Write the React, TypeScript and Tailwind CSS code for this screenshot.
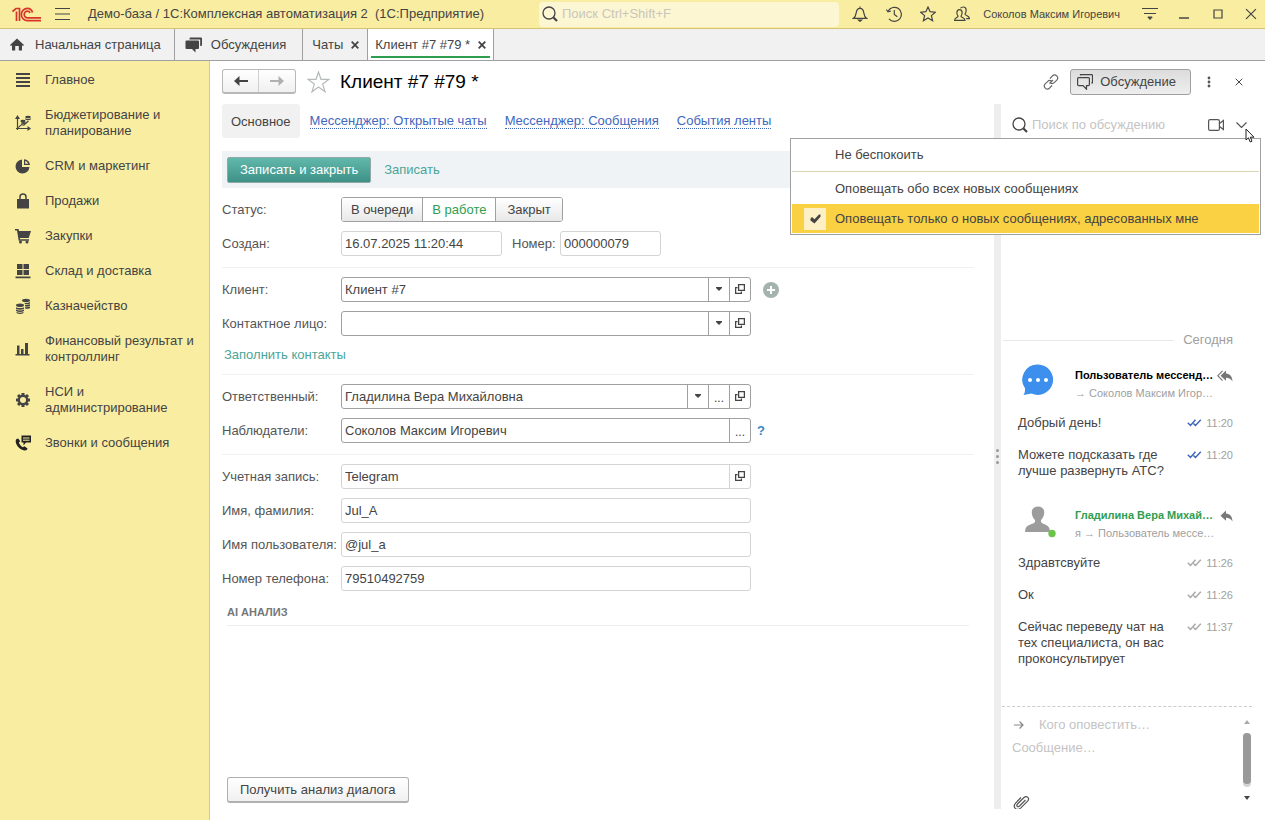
import { useState } from 'react';
import type { ReactNode } from 'react';

const sections = [
    { title: 'Главное', icon: 'menu' },
    { title: 'Бюджетирование и планирование', icon: 'budget' },
    { title: 'CRM и маркетинг', icon: 'pie' },
    { title: 'Продажи', icon: 'bag' },
    { title: 'Закупки', icon: 'cart' },
    { title: 'Склад и доставка', icon: 'stock' },
    { title: 'Казначейство', icon: 'coins' },
    { title: 'Финансовый результат и контроллинг', icon: 'bars' },
    { title: 'НСИ и администрирование', icon: 'gear' },
    { title: 'Звонки и сообщения', icon: 'phone' },
];

const sectionIcons: Record<string, ReactNode> = {
    menu: <path d="M1 1h14v2H1zM1 5h14v2H1zM1 9h14v2H1zM1 13h14v2H1z" />,
    budget: (
        <>
            <path d="M2.500 15V2M1 13.500h13" fill="none" stroke="currentColor" strokeWidth="1.200" />
            <path d="M2.500 0 0 4h5zM16 13.500 12.500 11v5zM3 12l3.500-3 2 .5L13 5.500l.8.900L9 10.700l-2.200-.5L3.500 13z" />
            <ellipse cx="8" cy="6" rx="2.600" ry="1.200" />
            <ellipse cx="8.500" cy="8" rx="2.600" ry="1" />
            <ellipse cx="13" cy="2" rx="2.800" ry="1.200" />
            <path d="M10.200 3.300c1.500.9 4 .9 5.600 0v1.300c-1.500 1-4 1-5.600 0z" />
        </>
    ),
    pie: <path d="M7 1.500V9h7.500A7 7 0 1 1 7 1.500zM9 1.200A6.600 6.600 0 0 1 15 7H9zM10.200 2.800v3h3a5 5 0 0 0-3-3z" fillRule="evenodd" />,
    bag: (
        <>
            <path d="M2 6h12v9.500H2z" />
            <path d="M5 8V4a3 3 0 0 1 6 0v4" fill="none" stroke="currentColor" strokeWidth="1.500" />
        </>
    ),
    cart: (
        <>
            <path d="M0 1h3.500l.6 2H16l-2.300 7H4.800l.3 1.200H14v1.500H3.700L2 2.500H0z" />
            <circle cx="5.500" cy="14" r="1.500" />
            <circle cx="12" cy="14" r="1.500" />
        </>
    ),
    stock: <path d="M2 1h5.500v5H2zM8.500 1H14v5H8.500zM2 7h5.500v5H2zM8.500 7H14v5H8.500zM.5 13.500h15v1.800H.5z" />,
    coins: (
        <>
            <ellipse cx="11" cy="2.500" rx="4" ry="1.700" />
            <path d="M9.500 4.700c1.800.5 4 .2 5.500-.7v1.500c-1.400.8-3 1-5 .7zM10 7c1.800.3 3.600 0 5-.7v1.500c-1.400.8-3 1-4.800.7zM10 9.200c1.800.3 3.600 0 5-.7V10c-1.400.8-3 1-4.800.7z" />
            <ellipse cx="5" cy="7.300" rx="4" ry="1.800" />
            <path d="M1 9.200c2.400 1.200 5.600 1.200 8 0v1.500c-2.400 1.300-5.600 1.300-8 0zM1 11.500c2.400 1.200 5.600 1.200 8 0V13c-2.400 1.300-5.600 1.300-8 0zM1.500 14c2.200 1 4.800 1 7 0v1c-2.200 1.200-4.800 1.200-7 0z" />
        </>
    ),
    bars: <path d="M2 4.500h2.500V13H6V8h2.500v5H10V2h3v11h1.500v1.500h-14V13H2z" />,
    gear: (
        <>
            <circle cx="8" cy="8" r="4.200" fill="none" stroke="currentColor" strokeWidth="2.400" />
            <g stroke="currentColor" strokeWidth="3">
                <path d="M8 1v2.500M8 12.500V15M1 8h2.500M12.500 8H15M3 3l2 2M11 11l2 2M13 3l-2 2M5 11l-2 2" />
            </g>
        </>
    ),
    phone: (
        <g fill="#222">
            <path d="M6.500.5h9.500v7h-5l-2.500 3v-3h-2z" />
            <path d="M8 3h6.500M8 5.200h6.500" stroke="#f9eda2" strokeWidth="1" />
            <path d="M3.200 3.500 1.500 4c-1.800 1.500-.5 6 2.500 8.800s6.500 3.300 8 2l.5-1.200-2.900-2.400-1.700 1c-1.600-.6-3.600-3-4-4.800l1.300-1.200z" />
        </g>
    ),
};

const statuses = ['В очереди', 'В работе', 'Закрыт'];

const relatedLinks = ['Мессенджер: Открытые чаты', 'Мессенджер: Сообщения', 'События ленты'];

const userMessages = [
    { text: 'Добрый день!', time: '11:20' },
    { text: 'Можете подсказать где лучше развернуть АТС?', time: '11:20' },
];

const operatorMessages = [
    { text: 'Здравтсвуйте', time: '11:26' },
    { text: 'Ок', time: '11:26' },
    { text: 'Сейчас переведу чат на тех специалиста, он вас проконсультирует', time: '11:37' },
];

function SearchIcon() {
    return (
        <svg className="size-4 shrink-0 text-[#444]" viewBox="0 0 16 16" fill="none" stroke="currentColor">
            <circle cx="7" cy="7" r="6" strokeWidth="1.300" />
            <path d="m11.500 11.500 3.500 3.500" strokeWidth="2.200" />
        </svg>
    );
}

function CloseIcon({ className }: { className: string }) {
    return (
        <svg className={className} viewBox="0 0 8 8" fill="none" stroke="currentColor">
            <path d="m.7.7 6.600 6.600M7.300.7.7 7.300" />
        </svg>
    );
}

function ReplyIcon({ double }: { double?: boolean }) {
    return (
        <svg className="h-3 w-4 shrink-0 text-[#777]" viewBox="0 0 16 12" fill="currentColor">
            <path d="M9 .5v3c4 .3 6.300 3 6.500 8-1.500-2.500-3.500-3.600-6.500-3.700v3L3.500 5.700z" />
            {double && <path d="M5.500.8.800 5.700l4.700 4.900" fill="none" stroke="currentColor" strokeWidth="1.200" />}
        </svg>
    );
}

function FieldButton({ kind }: { kind: 'drop' | 'dots' | 'open' }) {
    const labels = { drop: 'Выбрать из списка', dots: 'Выбрать', open: 'Открыть' };
    return (
        <button aria-label={labels[kind]} className="flex w-[21px] shrink-0 items-center justify-center border-l border-inherit pb-px text-[#444]">
            {kind === 'drop' && (
                <svg className="h-1 w-[6px]" viewBox="0 0 6 4" fill="currentColor"><path d="M0 0h6v1L3 4 0 1z" /></svg>
            )}
            {kind === 'dots' && <span className="pt-1 text-xs leading-3">...</span>}
            {kind === 'open' && (
                <svg className="size-[10px]" viewBox="0 0 10 10" fill="none" stroke="currentColor" strokeWidth="1.300">
                    <path d="M3.600.6h5.800v5.800H3.600zM2.500 3.600H.6v5.800h5.800V7.500" />
                </svg>
            )}
        </button>
    );
}

function Field({ id, label, value, buttons = [], readOnly, children }: {
    id: string;
    label: string;
    value: string;
    buttons?: ('drop' | 'dots' | 'open')[];
    readOnly?: boolean;
    children?: ReactNode;
}) {
    return (
        <div className="flex items-center">
            <label htmlFor={id} className="w-[119px] shrink-0 whitespace-nowrap text-[#555]">{label}</label>
            <div className={`flex h-[25px] w-full max-w-[410px] rounded-[3px] border bg-white ${readOnly ? 'border-[#d4d4d4]' : 'border-[#a0a0a0]'}`}>
                <input id={id} defaultValue={value} readOnly={readOnly} className="min-w-0 flex-1 bg-transparent px-[3px] outline-none" />
                {buttons.map((kind) => <FieldButton key={kind} kind={kind} />)}
            </div>
            {children}
        </div>
    );
}

function Message({ text, time, read }: { text: string; time: string; read?: boolean }) {
    return (
        <div className="mb-4 flex items-start">
            <p className="w-[155px]">{text}</p>
            <svg className={`ml-auto mt-1 h-2 w-[15px] ${read ? 'text-[#3f68bd]' : 'text-[#aaa]'}`} viewBox="0 0 15 8" fill="none" stroke="currentColor" strokeWidth="1.500">
                <path d="m.8 3.800 2.700 2.700L8.500.8M6.500 4.500l2 2L13.800.8" />
            </svg>
            <time className="w-[31px] text-right text-[11px] text-[#a0a0a0]">{time}</time>
        </div>
    );
}

function Author({ name, target, avatar, own }: { name: string; target: string; avatar: ReactNode; own?: boolean }) {
    return (
        <div className="flex h-[51px] items-start">
            <div className="ml-1 w-[53px] shrink-0">{avatar}</div>
            <div className="min-w-0 flex-1 whitespace-nowrap pt-[3px] text-[11px] leading-[17px]">
                <div className="flex items-center justify-between">
                    <b className={own ? 'text-[#2f9e4f]' : 'text-black'}>{name}</b>
                    <ReplyIcon double={!own} />
                </div>
                <div className="pt-px text-[#a0a0a0]">{target}</div>
            </div>
        </div>
    );
}

function NotifyMenu() {
    return (
        <div role="menu" className="absolute right-1 top-[34px] z-10 w-[471px] border border-[#a0a0a0] bg-white p-px">
            <button role="menuitem" className="block h-8 w-full border-b border-[#d9d6b8] pb-[2px] pl-[43px] text-left">Не беспокоить</button>
            <button role="menuitem" className="block h-8 w-full pl-[43px] pt-[2px] text-left">Оповещать обо всех новых сообщениях</button>
            <button role="menuitem" className="flex h-[29px] w-full items-center bg-[#fad143] pl-3 text-left">
                <span className="mr-[9px] flex size-[22px] items-center justify-center bg-[#fdf0c4]">
                    <svg className="h-[10px] w-[11px] text-[#444]" viewBox="0 0 11 10" fill="currentColor"><path d="M.5 4.500 2 3l2.500 2.300L9 .5h1.500v2.200L4.500 9.500.5 6.500z" /></svg>
                </span>
                Оповещать только о новых сообщениях, адресованных мне
            </button>
        </div>
    );
}

function Header() {
    return (
        <header className="flex h-[29px] shrink-0 items-center border-b border-[#d3c373] bg-[#f9eda2] text-[#444]">
            <div className="flex w-[539px] shrink-0 items-center whitespace-nowrap pl-3">
                <svg className="h-[15px] w-[30px]" viewBox="0 0 30 15" fill="none" stroke="#d8352a" strokeWidth="1.700">
                    <path d="M.5 4.500 4 1.500h3.500V14M4.500 14V4.500" />
                    <path d="M20.500 5.500c-.7-2.700-2.800-4.200-5-4.200a6 6 0 0 0 0 12.300H29" />
                    <path d="M18 6c-.4-1.200-1.300-1.800-2.500-1.800a3.200 3.200 0 0 0 0 6.600H29" />
                </svg>
                <button aria-label="Меню" className="ml-[13px]">
                    <svg className="block h-3 w-[15px]" viewBox="0 0 15 12" stroke="currentColor"><path d="M0 .5h15M0 6h15M0 11.500h15" /></svg>
                </button>
                <span className="ml-[18px]">Демо-база / 1С:Комплексная автоматизация 2&nbsp; (1С:Предприятие)</span>
            </div>
            <div className="flex h-[25px] w-[300px] items-center gap-1 rounded bg-[#fcf6d3] pl-[3px]">
                <SearchIcon />
                <input aria-label="Поиск" placeholder="Поиск Ctrl+Shift+F" className="min-w-0 flex-1 bg-transparent outline-none placeholder:text-[#c9c6bb]" />
            </div>
            <div className="ml-auto flex items-center whitespace-nowrap pr-2">
                <div className="flex items-center gap-[18px]">
                    <button aria-label="Оповещения">
                        <svg className="block size-4" viewBox="0 0 16 16" fill="none" stroke="currentColor" strokeWidth="1.200">
                            <path d="M1.500 12.300c2-1.500 2.300-2.800 2.700-5.500C4.600 3.800 6 2.300 8 2.300s3.400 1.500 3.800 4.500c.4 2.700.7 4 2.700 5.500zM8 .5v2" />
                            <path d="M6.500 14h3L8 15.300z" fill="currentColor" />
                        </svg>
                    </button>
                    <button aria-label="История">
                        <svg className="block size-4" viewBox="0 0 16 16" fill="none" stroke="currentColor" strokeWidth="1.200">
                            <path d="M2.200 5A7 7 0 1 1 3 12.800M8.300 4v4.500l3 2.200M.3 3.500l1.700 2.300L5 5" />
                        </svg>
                    </button>
                    <button aria-label="Избранное">
                        <svg className="block size-4" viewBox="0 0 16 16" fill="none" stroke="currentColor" strokeWidth="1.200">
                            <path d="m8 1 2.100 4.700 5.200.5-3.900 3.400 1.200 5.100L8 12l-4.600 2.700 1.200-5.100L.7 6.200l5.200-.5z" />
                        </svg>
                    </button>
                    <button aria-label="Пользователи">
                        <svg className="block size-4" viewBox="0 0 16 16" fill="none" stroke="currentColor" strokeWidth="1.200">
                            <path d="M.6 14.400c0-3 3.400-2.600 3.400-4.200C2.300 8 2.300 3.600 5.500 3.600S8.700 8 7 10.200c0 1.600 4 1.200 4 4.200z" />
                            <path d="M6.500 2.300C7 1.500 8 1 9.300 1c3.600 0 3.400 4.800 1.700 7 0 1.700 4.400 1.500 4.400 4.600h-3.200" />
                        </svg>
                    </button>
                </div>
                <span className="ml-[13px] text-[11px]">Соколов Максим Игоревич</span>
                <button aria-label="Настройки" className="ml-[22px]">
                    <svg className="block h-[14px] w-4" viewBox="0 0 16 14" stroke="currentColor"><path d="M0 1.500h16M2 6.500h12" /><path d="M5.800 10h4.400L8 12.500z" fill="currentColor" /></svg>
                </button>
                <button aria-label="Свернуть" className="ml-[21px]">
                    <svg className="block size-[10px]" viewBox="0 0 10 10" stroke="currentColor" strokeWidth="1.500"><path d="M0 9h10" /></svg>
                </button>
                <button aria-label="Развернуть" className="ml-6">
                    <svg className="block size-[10px]" viewBox="0 0 10 10" fill="none" stroke="currentColor" strokeWidth="1.200"><path d="M1 1h8v8H1z" /></svg>
                </button>
                <button aria-label="Закрыть" className="ml-[22px]"><CloseIcon className="size-[12px] stroke-[0.8]" /></button>
            </div>
        </header>
    );
}

function Tabs() {
    return (
        <nav className="flex h-8 shrink-0 border-b border-[#a0a0a0] bg-[#f1f1f1] text-[#444]">
            <a href="#home" className="flex items-center border-r border-[#a0a0a0] pl-[10px] pr-[13px]">
                <svg className="mr-[11px] h-[13px] w-[14px]" viewBox="0 0 14 13" fill="currentColor"><path d="M7 .5 14 7l-1 1-1-.8V12.500H8.800V8H5.200v4.500H2V7.200L1 8 0 7z" /></svg>
                Начальная страница
            </a>
            <a href="#talks" className="flex items-center border-r border-[#a0a0a0] pl-[10px] pr-4">
                <svg className="mr-[9px] h-4 w-[17px]" viewBox="0 0 17 16" fill="currentColor">
                    <path d="M4.500 1.500A1 1 0 0 1 5.500.5H16a1 1 0 0 1 1 1V8a1 1 0 0 1-1 1h-.8V2.500H4.500z" />
                    <path d="M1.500 3.500H13a1 1 0 0 1 1 1V11a1 1 0 0 1-1 1h-2.500v3.500L7 12H1.500a1 1 0 0 1-1-1V4.500a1 1 0 0 1 1-1z" />
                </svg>
                Обсуждения
            </a>
            <div className="flex items-center border-r border-[#a0a0a0] pl-[9px] pr-2">
                <a href="#chats">Чаты</a>
                <button aria-label="Закрыть Чаты" className="ml-2"><CloseIcon className="size-[8px] stroke-[1.800]" /></button>
            </div>
            <div className="flex border-r border-[#a0a0a0] bg-white px-[3px] pb-[2px]">
                <div className="flex items-center border-b-2 border-[#2f9e4f] px-1 pt-1">
                    <a href="#client">Клиент #7 #79 *</a>
                    <button aria-label="Закрыть Клиент" className="ml-2"><CloseIcon className="size-[8px] stroke-[1.800]" /></button>
                </div>
            </div>
        </nav>
    );
}

function Sidebar() {
    return (
        <nav className="w-[210px] shrink-0 border-r border-[#cfc9a0] bg-[#f9eda2] pt-[2px]">
            {sections.map((section) => (
                <a key={section.icon} href={`#${section.icon}`} className="flex items-center pb-[10px] pl-[15px] pr-2 pt-[9px]">
                    <svg className="mr-[14px] size-4 shrink-0 text-[#444]" viewBox="0 0 16 16" fill="currentColor">{sectionIcons[section.icon]}</svg>
                    {section.title}
                </a>
            ))}
        </nav>
    );
}

function Discussion() {
    return (
        <aside className="relative flex w-[264px] shrink-0 flex-col pl-px">
            <div className="flex h-[42px] items-center pl-[10px] pr-[18px]">
                <SearchIcon />
                <input aria-label="Поиск по обсуждению" placeholder="Поиск по обсуждению" className="ml-1 min-w-0 flex-1 bg-transparent outline-none placeholder:text-[#c4c4c4]" />
                <button aria-label="Видеозвонок">
                    <svg className="block h-3 w-4 text-[#555]" viewBox="0 0 16 12" fill="none" stroke="currentColor" strokeWidth="1.200">
                        <rect x=".6" y=".6" width="10.800" height="10.800" rx="1.500" />
                        <path d="M11.500 4.500 15.400 1.500v9l-3.900-3" />
                    </svg>
                </button>
                <button aria-label="Настройка оповещений" className="ml-3">
                    <svg className="block h-[6px] w-[11px] text-[#555]" viewBox="0 0 11 6" fill="none" stroke="currentColor" strokeWidth="1.200"><path d="m.5.5 5 5 5-5" /></svg>
                </button>
            </div>
            <NotifyMenu />
            {/* Mouse pointer */}
            <svg className="absolute right-[10px] top-6 z-20 h-[15px] w-[10px]" viewBox="0 0 10 15" fill="#fff" stroke="#222">
                <path d="M1 1v11l2.500-2.200 1.700 4.200 1.800-.8-1.700-4H9z" />
            </svg>

            <div className="flex flex-1 flex-col justify-end pb-[23px] pl-4 pr-8">
                <div className="-ml-[15px] mb-[16px] flex items-center gap-[9px] pt-px text-[#a0a0a0]">
                    <div className="h-px flex-1 bg-[#e8e8e8]" />
                    Сегодня
                </div>
                <Author
                    name="Пользователь мессенд…"
                    target="→ Соколов Максим Игор…"
                    avatar={
                        <svg className="size-8" viewBox="0 0 32 32" fill="#3c8fec">
                            <path d="M16 .5a15.200 15.200 0 1 1-6.500 29L1.500 31c1.300-2 1.500-3.500 1.600-6.500A15.200 15.200 0 0 1 16 .5z" />
                            <g fill="#fff"><circle cx="8" cy="16" r="2" /><circle cx="16" cy="16" r="2" /><circle cx="24" cy="16" r="2" /></g>
                        </svg>
                    }
                />
                {userMessages.map((message) => <Message key={message.text} {...message} read />)}
                <div className="mt-[9px]">
                    <Author
                        own
                        name="Гладилина Вера Михай…"
                        target="я → Пользователь мессе…"
                        avatar={
                            <svg className="h-[34px] w-[34px]" viewBox="0 0 34 34" fill="#9c9c9c">
                                <path d="M16 2.500c-4 0-6.500 2.500-6.200 6.500.2 3 1.500 5.500 3.200 7v2c-1.500 2.200-8 2.500-9.500 6.500L3 28h25l-.5-3.500c-1.500-4-7-4.300-8.500-6.500v-2c1.700-1.500 3-4 3.200-7 .3-4-2.200-6.500-6.200-6.500z" />
                                <circle cx="30" cy="29.500" r="3.700" fill="#6cc24a" />
                            </svg>
                        }
                    />
                </div>
                {operatorMessages.map((message) => <Message key={message.text} {...message} />)}
            </div>

            {/* Composer */}
            <div className="mr-[13px] flex h-[103px] shrink-0 border-t border-dashed border-[#ccc]">
                <div className="flex min-w-0 flex-1 flex-col overflow-hidden pl-[10px] pt-[10px]">
                    <div className="flex items-center">
                        <svg className="ml-[2px] h-2 w-[10px] text-[#888]" viewBox="0 0 10 8" fill="none" stroke="currentColor" strokeWidth="1.200"><path d="M0 4h9M5.500.5 9 4 5.500 7.500" /></svg>
                        <input aria-label="Кого оповестить" placeholder="Кого оповестить…" className="ml-[15px] min-w-0 flex-1 bg-transparent leading-4 outline-none placeholder:text-[#c4c4c4]" />
                    </div>
                    <textarea aria-label="Сообщение" placeholder="Сообщение…" className="mt-[7px] h-[50px] shrink-0 resize-none overflow-hidden bg-transparent leading-4 outline-none placeholder:text-[#c4c4c4]" />
                    <button aria-label="Прикрепить файл" className="mt-1 h-4 w-5 shrink-0">
                        <svg className="block h-[18px] w-5 text-[#555]" viewBox="0 0 20 18" fill="none" stroke="currentColor" strokeWidth="1.200">
                            <path d="m13.500 6-6 6c-1.800 1.600-3.600-.2-2-2l6.500-6.500c2.800-2.500 6.200.8 3.600 3.600l-7 7c-4 3.500-8.600-1-5-5L9 3.500" />
                        </svg>
                    </button>
                </div>
                <div className="flex w-[10px] flex-col items-center pb-[9px] pt-[13px]">
                    <svg className="h-1 w-[6px] shrink-0 text-[#aaa]" viewBox="0 0 6 4" fill="currentColor"><path d="M0 4h6L3 0z" /></svg>
                    <div className="my-[9px] w-2 flex-1 rounded-full bg-[#d4d4d4] pb-[3px]">
                        <div className="h-full rounded-full bg-[#999]" />
                    </div>
                    <svg className="h-1 w-[6px] shrink-0 text-[#444]" viewBox="0 0 6 4" fill="currentColor"><path d="M0 0h6L3 4z" /></svg>
                </div>
            </div>
        </aside>
    );
}

export default function App() {
    const [status, setStatus] = useState('В работе');

    return (
        <div className="flex min-h-screen flex-col bg-white font-['Liberation_Sans',Arial,sans-serif] text-[13px] leading-4 text-[#444]">
            <Header />
            <Tabs />
            <div className="flex flex-1">
                <Sidebar />
                <main className="flex min-w-0 flex-1 flex-col pb-[11px] pl-3">
                    <div className="mb-[2px] flex h-[41px] shrink-0 items-center pr-[22px]">
                        <div className="flex h-[25px] rounded-[3px] border border-b-2 border-[#b8b8b8] bg-linear-to-b from-white to-[#f0f0f0]">
                            <button aria-label="Назад" className="flex w-9 items-center justify-center border-r border-[#d0d0d0] text-[#444]">
                                <svg className="h-[10px] w-[14px]" viewBox="0 0 14 10" fill="currentColor"><path d="M5.500 0v4H14v2H5.500v4L0 5z" /></svg>
                            </button>
                            <button aria-label="Вперед" className="flex w-9 items-center justify-center text-[#b0b0b0]">
                                <svg className="h-[10px] w-[14px]" viewBox="0 0 14 10" fill="currentColor"><path d="M8.500 0v4H0v2h8.500v4L14 5z" /></svg>
                            </button>
                        </div>
                        <button aria-label="В избранное" className="ml-[11px] text-[#b5babd]">
                            <svg className="block h-[22px] w-[23px]" viewBox="0 0 23 22" fill="none" stroke="currentColor" strokeWidth="1.200">
                                <path d="m11.500 1 2.500 7.300h8l-6.300 4.800 2.300 7.700-6.500-4.700L5 20.800l2.300-7.700L1 8.300h8z" />
                            </svg>
                        </button>
                        <h1 className="ml-[10px] text-[19px] text-black">Клиент #7 #79 *</h1>
                        <button aria-label="Ссылка" className="ml-auto">
                            <svg className="block size-4 text-[#666]" viewBox="0 0 16 16" fill="none" stroke="currentColor" strokeWidth="1.200">
                                <path d="M6.500 9.500 10 6M7 4.500l2.500-2.700c2.800-2.600 7 1.400 4.300 4.300l-2.600 2.600c-1 1-2.700 1-3.700.3M9 11.500l-2.500 2.700c-2.800 2.600-7-1.400-4.300-4.300l2.600-2.600c1-1 2.700-1 3.700-.3" />
                            </svg>
                        </button>
                        <button className="ml-[11px] flex h-[26px] items-center rounded-[3px] border border-[#a0a0a0] bg-linear-to-b from-[#dcdcdc] to-[#eee] pl-[6px] pr-[14px]">
                            <svg className="mr-[7px] h-4 w-4" viewBox="0 0 16 16" fill="none" stroke="currentColor" strokeWidth="1.200">
                                <path d="M1.600 3.600h9.800a1 1 0 0 1 1 1v6a1 1 0 0 1-1 1H9.500v3.600L6 11.600H1.600a1 1 0 0 1-1-1v-6a1 1 0 0 1 1-1zM3.500 1.600v-1h11a1 1 0 0 1 1 1v7.200h-1.200" />
                            </svg>
                            Обсуждение
                        </button>
                        <button aria-label="Еще" className="ml-4">
                            <svg className="block h-3 w-1 text-[#555]" viewBox="0 0 4 12" fill="currentColor"><circle cx="2" cy="2" r="1.400" /><circle cx="2" cy="6" r="1.400" /><circle cx="2" cy="10" r="1.400" /></svg>
                        </button>
                        <button aria-label="Закрыть форму" className="ml-6"><CloseIcon className="size-[8px]" /></button>
                    </div>

                    <div className="flex flex-1">
                        <div className="flex min-w-0 flex-1 flex-col">
                            <nav className="flex h-[34px] items-center whitespace-nowrap">
                                <span className="mr-[10px] flex h-full items-center rounded-[3px] bg-[#f1f1f1] px-[9px] pt-[2px]">Основное</span>
                                {relatedLinks.map((link) => (
                                    <a key={link} href="#related" className="mr-[18px] border-b border-dotted border-[#3f68bd] pt-px leading-[14px] text-[#3f68bd]">{link}</a>
                                ))}
                            </nav>

                            <div className="mr-3 mt-[13px] flex h-[37px] items-center bg-[#eff3f6] pl-[5px]">
                                <button className="h-[26px] rounded-[2px] border border-[#8fa8a4] bg-linear-to-b from-[#62b8ac] to-[#3d9186] px-3 text-white">Записать и закрыть</button>
                                <button className="ml-[13px] text-[#4aa598]">Записать</button>
                            </div>

                            <form className="mr-5 flex flex-col" onSubmit={(e) => e.preventDefault()}>
                                <div className="flex flex-col gap-[9px] border-b border-[#eef1f2] pb-[11px] pt-[9px]">
                                    <div className="flex items-center">
                                        <span className="w-[119px] shrink-0 text-[#555]">Статус:</span>
                                        <div className="flex h-[25px] overflow-hidden rounded-[3px] border border-[#a0a0a0]">
                                            {statuses.map((item) => (
                                                <button
                                                    key={item}
                                                    aria-pressed={status === item}
                                                    onClick={() => setStatus(item)}
                                                    className={`border-r border-[#a0a0a0] px-[9px] last:border-r-0 last:px-[11px] ${status === item ? 'bg-white text-[#2f9e4f]' : 'bg-linear-to-b from-white to-[#e8e8e8]'}`}
                                                >
                                                    {item}
                                                </button>
                                            ))}
                                        </div>
                                    </div>
                                    <div className="flex items-center">
                                        <label htmlFor="created" className="w-[119px] shrink-0 text-[#555]">Создан:</label>
                                        <input id="created" defaultValue="16.07.2025 11:20:44" className="h-[25px] w-[161px] rounded-[3px] border border-[#d4d4d4] px-[3px] outline-none" />
                                        <label htmlFor="number" className="w-[58px] pl-[10px] text-[#555]">Номер:</label>
                                        <input id="number" defaultValue="000000079" className="h-[25px] w-[101px] rounded-[3px] border border-[#d4d4d4] px-[3px] outline-none" />
                                    </div>
                                </div>

                                <div className="flex flex-col gap-[9px] border-b border-[#eef1f2] pb-[11px] pt-[9px]">
                                    <Field id="client" label="Клиент:" value="Клиент #7" buttons={['drop', 'open']}>
                                        <button aria-label="Добавить" className="ml-3">
                                            <svg className="block size-4" viewBox="0 0 16 16"><circle cx="8" cy="8" r="8" fill="#a5b3ae" /><path d="M8 4v8M4 8h8" stroke="#fff" strokeWidth="2" /></svg>
                                        </button>
                                    </Field>
                                    <Field id="contact" label="Контактное лицо:" value="" buttons={['drop', 'open']} />
                                    <button className="h-[18px] self-start pl-[2px] pt-[2px] text-[#4aa598]">Заполнить контакты</button>
                                </div>

                                <div className="flex flex-col gap-[9px] border-b border-[#eef1f2] pb-[11px] pt-[9px]">
                                    <Field id="responsible" label="Ответственный:" value="Гладилина Вера Михайловна" buttons={['drop', 'dots', 'open']} />
                                    <Field id="watchers" label="Наблюдатели:" value="Соколов Максим Игоревич" buttons={['dots']}>
                                        <button aria-label="Справка" className="ml-[6px] font-bold text-[#3c86c8]">?</button>
                                    </Field>
                                </div>

                                <div className="flex flex-col gap-[9px] pt-[9px]">
                                    <Field readOnly id="account" label="Учетная запись:" value="Telegram" buttons={['open']} />
                                    <Field readOnly id="fullname" label="Имя, фамилия:" value="Jul_A" />
                                    <Field readOnly id="username" label="Имя пользователя:" value="@jul_a" />
                                    <Field readOnly id="phone" label="Номер телефона:" value="79510492759" />
                                </div>

                                <h2 className="mx-[5px] mt-[13px] border-b border-[#eee] pb-[5px] text-[11px] font-bold text-[#777]">AI АНАЛИЗ</h2>
                            </form>

                            <button className="mb-[6px] ml-[5px] mt-auto h-[26px] self-start rounded-[3px] border border-b-2 border-[#b0b0b0] bg-linear-to-b from-white to-[#f0f0f0] px-3">Получить анализ диалога</button>
                        </div>

                        <div className="flex w-[7px] shrink-0 items-center justify-center bg-[#eee]">
                            <svg className="h-[15px] w-[3px]" viewBox="0 0 3 15" fill="#999"><circle cx="1.500" cy="1.500" r="1.500" /><circle cx="1.500" cy="7.500" r="1.500" /><circle cx="1.500" cy="13.500" r="1.500" /></svg>
                        </div>

                        <Discussion />
                    </div>
                </main>
            </div>
        </div>
    );
}
